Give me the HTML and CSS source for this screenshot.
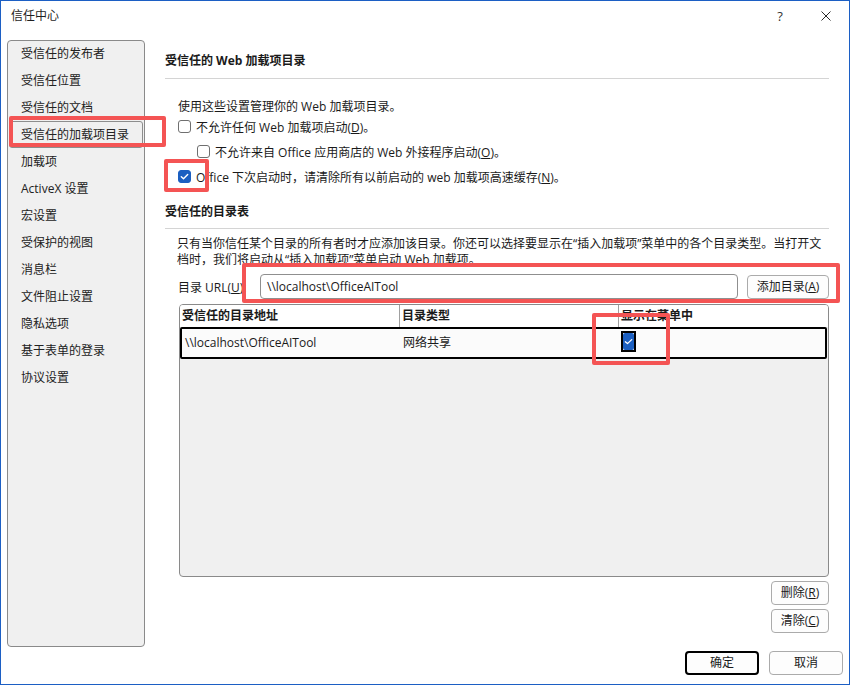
FILE: index.html
```html
<!DOCTYPE html>
<html lang="zh-CN">
<head>
<meta charset="utf-8">
<title>信任中心</title>
<link rel="stylesheet" href="styles.css">
</head>
<body>
<div class="window">
  <div class="titlebar">
    <span class="title">信任中心</span>
    <span class="tb-help">?</span>
    <span class="tb-close"><svg width="10" height="10" viewBox="0 0 10 10"><path d="M0.5 0.5 L9.5 9.5 M9.5 0.5 L0.5 9.5" stroke="#2b2b2b" stroke-width="1" fill="none"/></svg></span>
  </div>
  <div class="body">
    <nav class="sidebar">
      <div class="nav-item">受信任的发布者</div>
      <div class="nav-item">受信任位置</div>
      <div class="nav-item">受信任的文档</div>
      <div class="nav-item selected">受信任的加载项目录</div>
      <div class="nav-item">加载项</div>
      <div class="nav-item">ActiveX 设置</div>
      <div class="nav-item">宏设置</div>
      <div class="nav-item">受保护的视图</div>
      <div class="nav-item">消息栏</div>
      <div class="nav-item">文件阻止设置</div>
      <div class="nav-item">隐私选项</div>
      <div class="nav-item">基于表单的登录</div>
      <div class="nav-item">协议设置</div>
    </nav>
    <main class="main">
      <h2 class="section-title">受信任的 Web 加载项目录</h2>
      <div class="rule"></div>
      <p class="intro">使用这些设置管理你的 Web 加载项目录。</p>
      <div class="check-row"><span class="cb"></span><span>不允许任何 Web 加载项启动(<u>D</u>)。</span></div>
      <div class="check-row indent"><span class="cb"></span><span>不允许来自 Office 应用商店的 Web 外接程序启动(<u>O</u>)。</span></div>
      <div class="check-row"><span class="cb checked"><svg width="11" height="11" viewBox="0 0 11 11"><path d="M2.3 5.8 L4.5 7.8 L8.7 3.4" stroke="#fff" stroke-width="1.4" fill="none" stroke-linecap="round" stroke-linejoin="round"/></svg></span><span>Office 下次启动时，请清除所有以前启动的 web 加载项高速缓存(<u>N</u>)。</span></div>
      <h2 class="section-title second">受信任的目录表</h2>
      <div class="rule second"></div>
      <div class="desc">
        <div class="desc-line">只有当你信任某个目录的所有者时才应添加该目录。你还可以选择要显示在“插入加载项”菜单中的各个目录类型。当打开文</div>
        <div class="desc-line">档时，我们将启动从“插入加载项”菜单启动 Web 加载项。</div>
      </div>
      <div class="url-row">
        <span class="url-label">目录 URL(<u>U</u>):</span>
        <div class="input">\\localhost\OfficeAITool</div>
        <button class="btn add">添加目录(<u>A</u>)</button>
      </div>
      <div class="table">
        <div class="thead">
          <div class="th c1">受信任的目录地址</div>
          <div class="th c2">目录类型</div>
          <div class="th c3">显示在菜单中</div>
        </div>
        <div class="trow">
          <div class="td c1">\\localhost\OfficeAITool</div>
          <div class="td c2">网络共享</div>
          <div class="td c3"><span class="grid-cb"><span class="grid-cb-fill"><svg width="11" height="11" viewBox="0 0 11 11"><path d="M2.3 5.8 L4.5 7.6 L8.7 3.6" stroke="#fff" stroke-width="1.3" fill="none" stroke-linecap="round" stroke-linejoin="round"/></svg></span></span></div>
        </div>
      </div>
      <div class="side-buttons">
        <button class="btn small">删除(<u>R</u>)</button>
        <button class="btn small">清除(<u>C</u>)</button>
      </div>
    </main>
  </div>
  <div class="footer">
    <button class="btn wide ok">确定</button>
    <button class="btn wide">取消</button>
  </div>
  <div class="mark m1"></div>
  <div class="mark m2"></div>
  <div class="mark m3"></div>
  <div class="mark m4"></div>
</div>
</body>
</html>
```

FILE: styles.css
```css
* { box-sizing: border-box; }
html, body { margin: 0; padding: 0; }
body {
  width: 850px;
  height: 685px;
  background: #fff;
  font-family: "Open Sans", "Noto Sans CJK SC", sans-serif;
  font-size: 12px;
  color: #1a1a1a;
}
.window {
  position: relative;
  width: 850px;
  height: 685px;
  border: 1px solid #1c5fc4;
  background: #fff;
  display: flex;
  flex-direction: column;
}
.titlebar {
  height: 30px;
  display: flex;
  align-items: center;
  padding-left: 10px;
  color: #1f1f1f;
}
.title { flex: 1; line-height: 30px; }
.tb-help {
  width: 14px;
  text-align: center;
  font-size: 13px;
  color: #333;
}
.tb-close {
  width: 20px;
  margin-left: 29px;
  margin-right: 13px;
  display: flex;
  justify-content: center;
  align-items: center;
}
.body {
  display: flex;
  margin-top: 9px;
  height: 607px;
}
.sidebar {
  margin-left: 6px;
  width: 138px;
  height: 607px;
  background: #f0f0f0;
  border: 1px solid #8a8a8a;
  border-radius: 4px;
  padding: 0 1px;
  color: #222;
}
.nav-item {
  height: 27px;
  line-height: 25px;
  padding-left: 11px;
  border: 1px solid transparent;
  border-radius: 3px;
  white-space: nowrap;
}
.nav-item:first-child { margin-top: -1px; }
.nav-item.selected { border-color: #8d8d8d; }

.main {
  margin-left: 20px;
  width: 664px;
}
.section-title {
  margin: 11px 0 0;
  font-size: 12px;
  font-weight: bold;
  line-height: 20px;
}
.section-title.second { margin-top: 13px; }
.rule {
  height: 1px;
  background: #d4d4d4;
  margin-top: 7px;
}
.rule.second { margin-top: 6px; }
.intro {
  margin: 20px 0 0 13px;
  line-height: 15px;
}
.check-row {
  display: flex;
  align-items: center;
  height: 25px;
  margin-left: 13px;
  white-space: nowrap;
}
.check-row.indent { margin-left: 32px; }
.cb {
  flex: 0 0 13px;
  width: 13px;
  height: 13px;
  border: 1px solid #6f6f6f;
  border-radius: 3px;
  margin-right: 5px;
  background: #fff;
  display: flex;
  align-items: center;
  justify-content: center;
}
.cb.checked {
  background: #1b5fc1;
  border-color: #1b5fc1;
}
.desc {
  margin: 7px 0 0 12px;
}
.desc-line {
  height: 16px;
  line-height: 16px;
  white-space: nowrap;
}
.url-row {
  display: flex;
  align-items: center;
  margin: 6px 0 0 13px;
  height: 25px;
}
.url-label { flex: 0 0 82px; white-space: nowrap; }
.input {
  width: 478px;
  height: 25px;
  border: 1px solid #8f8f8f;
  border-radius: 4px;
  padding-left: 6px;
  line-height: 23px;
  background: #fff;
}
.btn {
  font-family: inherit;
  font-size: 12px;
  color: #1a1a1a;
  background: #fdfdfd;
  border: 1px solid #ababab;
  border-radius: 4px;
  padding: 0;
  height: 24px;
  line-height: 20px;
  white-space: nowrap;
}
.btn.add { margin-left: 9px; width: 82px; }
.btn.small { width: 58px; }
.btn.wide { width: 74px; }
.btn.ok { border: 2px solid #000; }

.table {
  margin: 5px 0 0 14px;
  width: 650px;
  height: 273px;
  border: 1px solid #8a8a8a;
  border-radius: 4px;
  background: #f0f0f0;
  overflow: hidden;
}
.thead {
  display: flex;
  height: 22px;
  background: #fff;
}
.th {
  font-weight: bold;
  padding-left: 2px;
  line-height: 22px;
  white-space: nowrap;
}
.th.c1 { width: 220px; border-right: 1px solid #a0a0a0; }
.th.c2 { width: 219px; border-right: 1px solid #a0a0a0; }
.th.c3 { flex: 1; }
.trow {
  display: flex;
  height: 32px;
  border: 2px solid #000;
  border-radius: 2px;
  background: #fbfbfb;
  margin-right: 1px;
}
.td { line-height: 28px; white-space: nowrap; }
.td.c1 { width: 221px; padding-left: 3px; }
.td.c2 { width: 218px; }
.td.c3 { flex: 1; display: flex; align-items: flex-start; }
.grid-cb {
  margin-top: 2px;
  width: 15px;
  height: 21px;
  border: 2px solid #000;
  display: flex;
}
.grid-cb-fill {
  flex: 1;
  background: #1b5fc1;
  border-radius: 2px;
  display: flex;
  align-items: center;
  justify-content: center;
}
.side-buttons {
  display: flex;
  flex-direction: column;
  align-items: flex-end;
  gap: 4px;
  margin-top: 4px;
}
.footer {
  display: flex;
  justify-content: flex-end;
  gap: 10px;
  margin-top: 4px;
  padding-right: 6px;
}
.mark {
  position: absolute;
  border: 4px solid #f45454;
  border-radius: 2px;
  pointer-events: none;
}
.m1 { left: 8px; top: 115px; width: 157px; height: 31px; }
.m2 { left: 241px; top: 262px; width: 598px; height: 40px; }
.m3 { left: 163px; top: 158px; width: 45px; height: 33px; }
.m4 { left: 591px; top: 312px; width: 78px; height: 52px; }
```
